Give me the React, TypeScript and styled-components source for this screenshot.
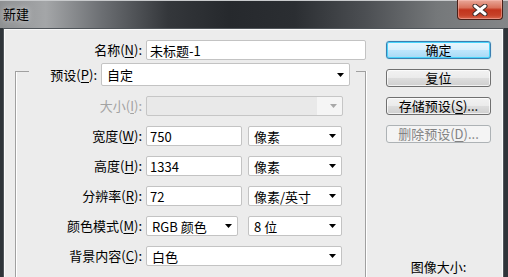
import React from 'react'
import styled, { createGlobalStyle, css } from 'styled-components'

const colors = {
  frame: '#2f3439',
  client: '#ececec',
  groupLine: '#a0a0a0',
  fieldBorder: '#c3c3c3',
  disabled: '#a3a3a3',
}

const GlobalStyle = createGlobalStyle`
  html, body {
    margin: 0;
    padding: 0;
    overflow: hidden;
    background: ${colors.frame};
  }
  body {
    font: 13px 'Noto Sans CJK SC', 'Microsoft YaHei', sans-serif;
    color: #000;
  }
`

const Window = styled.div`
  width: 508px;
  height: 277px;
  display: flex;
  flex-direction: column;
  background: ${colors.frame};
  overflow: hidden;
`
const TitleBar = styled.div`
  flex: none;
  height: 28px;
  display: flex;
  align-items: flex-start;
  justify-content: space-between;
  background: linear-gradient(
    90deg,
    #8e9092 0%,
    #a4a6a8 9%,
    #6c6f73 20%,
    #34373b 33%,
    #26292d 45%,
    #2b2e32 58%,
    #4c4f53 72%,
    #75787a 86%,
    #848688 100%
  );
  box-shadow: inset 0 1px 0 #c8cacc;
`
const Title = styled.div`
  padding: 5px 0 0 3px;
  line-height: 17px;
  color: #000;
  text-shadow: 0 0 6px rgba(255, 255, 255, 0.8);
`
const CloseButton = styled.div`
  width: 46px;
  height: 20px;
  margin-right: 5px;
  box-sizing: border-box;
  display: flex;
  align-items: center;
  justify-content: center;
  border: 1px solid #4a2018;
  border-top: none;
  border-radius: 0 0 4px 4px;
  background: linear-gradient(
    180deg,
    #e9a899 0%,
    #d9725c 40%,
    #c2341c 52%,
    #c64128 80%,
    #d8664c 100%
  );
  box-shadow: inset 0 0 0 1px rgba(255, 200, 190, 0.45);
`
const Client = styled.div`
  flex: 1;
  margin: 0 4px 0 3px;
  display: flex;
  padding-top: 11px;
  background: ${colors.client};
  border: 1px solid #50555a;
  border-bottom: none;
  box-shadow: inset 1px 1px 0 #fafafa, inset -1px 0 0 #fafafa;
`
const Main = styled.div`
  width: 362px;
  flex: none;
  box-sizing: border-box;
  padding-left: 11px;
  display: flex;
  flex-direction: column;
`
const Row = styled.div`
  display: flex;
  align-items: center;
  gap: 4px;
  height: 20px;
`
const Label = styled.div<{ $w: number; $disabled?: boolean }>`
  width: ${(p) => p.$w}px;
  flex: none;
  text-align: right;
  white-space: nowrap;
  line-height: 20px;
  color: ${(p) => (p.$disabled ? colors.disabled : '#000')};
`
const Key = styled.span`
  text-decoration: underline;
  text-underline-offset: 2px;
`
const Controls = styled.div<{ $gap: number }>`
  display: flex;
  gap: ${(p) => p.$gap}px;
`
const fieldBox = css`
  box-sizing: border-box;
  height: 20px;
  display: flex;
  align-items: center;
  background: #fff;
  border: 1px solid ${colors.fieldBorder};
  border-radius: 2px;
  white-space: nowrap;
`
const TextField = styled.div<{ $w: number }>`
  ${fieldBox};
  width: ${(p) => p.$w}px;
  padding-left: 3px;
`
const Select = styled.div<{ $w: number; $h?: number; $disabled?: boolean }>`
  ${fieldBox};
  width: ${(p) => p.$w}px;
  height: ${(p) => p.$h ?? 20}px;
  padding: 0 5px;
  justify-content: space-between;
  ${(p) =>
    p.$disabled &&
    css`
      background: linear-gradient(90deg, #e9e9e9 0 87%, #f5f5f5 87%);
      border-color: #c6c6c6;
    `}
`
const Arrow = ({ color = '#000' }: { color?: string }) => (
  <svg width="7" height="4" viewBox="0 0 7 4">
    <path d="M0 0 H7 L3.5 4 Z" fill={color} />
  </svg>
)

const GroupBox = styled.fieldset`
  flex: 1;
  width: 351px;
  min-width: 0;
  box-sizing: border-box;
  margin: -3px 0 0;
  padding: 0;
  border: 1px solid ${colors.groupLine};
  border-bottom: none;
  box-shadow: inset 1px 0 0 #fff, 1px 0 0 #fff;
`
const Legend = styled.legend`
  margin-left: 13px;
  padding: 6px 6px 0 0;
`
const LegendInner = styled.div`
  display: flex;
  align-items: center;
  gap: 4px;
`
const GroupRows = styled.div`
  display: flex;
  flex-direction: column;
  gap: 10px;
  padding-top: 10px;
`
const Side = styled.div`
  width: 105px;
  margin-left: 20px;
  padding-top: 1px;
  display: flex;
  flex-direction: column;
  gap: 10px;
`
const Button = styled.div<{ $variant?: 'default' | 'disabled' }>`
  height: 18px;
  box-sizing: border-box;
  display: flex;
  align-items: center;
  justify-content: center;
  line-height: 16px;
  border: 1px solid #707070;
  border-radius: 3px;
  background: linear-gradient(180deg, #f2f2f2 0%, #ebebeb 48%, #dddddd 52%, #cfcfcf 100%);
  box-shadow: inset 0 0 0 1px rgba(255, 255, 255, 0.7);
  ${(p) =>
    p.$variant === 'default' &&
    css`
      border-color: #3c7fb1;
      background: linear-gradient(180deg, #eaf6fd 0%, #d9f0fc 48%, #bee6fd 52%, #a7d9f5 100%);
      box-shadow: inset 0 0 0 1px #48d4fa, 0 0 1px #48d4fa;
    `}
  ${(p) =>
    p.$variant === 'disabled' &&
    css`
      border-color: #adb2b5;
      background: #f4f4f4;
      color: #838383;
      box-shadow: none;
    `}
`
const SizeInfo = styled.div`
  margin-top: 106px;
  text-align: center;
  line-height: 16px;
`

const App = () => {
  return (
    <>
      <GlobalStyle />
      <Window>
        <TitleBar>
          <Title>新建</Title>
          <CloseButton>
            <svg width="16" height="12" viewBox="0 0 16 12">
              <path d="M3 2 L13 10 M13 2 L3 10" stroke="#3a2a28" strokeWidth="5" strokeLinecap="round" />
              <path d="M3 2 L13 10 M13 2 L3 10" stroke="#fff" strokeWidth="3" strokeLinecap="round" />
            </svg>
          </CloseButton>
        </TitleBar>
        <Client>
          <Main>
            <Row>
              <Label $w={127}>
                名称(<Key>N</Key>):
              </Label>
              <TextField $w={222}>未标题-1</TextField>
            </Row>
            <GroupBox>
              <Legend>
                <LegendInner>
                  <Label $w={68}>
                    预设(<Key>P</Key>):
                  </Label>
                  <Select $w={249} $h={23}>
                    自定
                    <Arrow />
                  </Select>
                </LegendInner>
              </Legend>
              <GroupRows>
                <Row>
                  <Label $w={126} $disabled>
                    大小(<Key>I</Key>):
                  </Label>
                  <Select $w={197} $disabled>
                    <span />
                    <Arrow color="#a8a8a8" />
                  </Select>
                </Row>
                <Row>
                  <Label $w={126}>
                    宽度(<Key>W</Key>):
                  </Label>
                  <Controls $gap={6}>
                    <TextField $w={96}>750</TextField>
                    <Select $w={94}>
                      像素
                      <Arrow />
                    </Select>
                  </Controls>
                </Row>
                <Row>
                  <Label $w={126}>
                    高度(<Key>H</Key>):
                  </Label>
                  <Controls $gap={6}>
                    <TextField $w={96}>1334</TextField>
                    <Select $w={94}>
                      像素
                      <Arrow />
                    </Select>
                  </Controls>
                </Row>
                <Row>
                  <Label $w={126}>
                    分辨率(<Key>R</Key>):
                  </Label>
                  <Controls $gap={6}>
                    <TextField $w={96}>72</TextField>
                    <Select $w={94}>
                      像素/英寸
                      <Arrow />
                    </Select>
                  </Controls>
                </Row>
                <Row>
                  <Label $w={126}>
                    颜色模式(<Key>M</Key>):
                  </Label>
                  <Controls $gap={10}>
                    <Select $w={92}>
                      RGB 颜色
                      <Arrow />
                    </Select>
                    <Select $w={94}>
                      8 位
                      <Arrow />
                    </Select>
                  </Controls>
                </Row>
                <Row>
                  <Label $w={126}>
                    背景内容(<Key>C</Key>):
                  </Label>
                  <Select $w={196}>
                    白色
                    <Arrow />
                  </Select>
                </Row>
              </GroupRows>
            </GroupBox>
          </Main>
          <Side>
            <Button $variant="default">确定</Button>
            <Button>复位</Button>
            <Button>
              存储预设(<Key>S</Key>)...
            </Button>
            <Button $variant="disabled">
              删除预设(<Key>D</Key>)...
            </Button>
            <SizeInfo>图像大小:</SizeInfo>
          </Side>
        </Client>
      </Window>
    </>
  )
}

export default App
